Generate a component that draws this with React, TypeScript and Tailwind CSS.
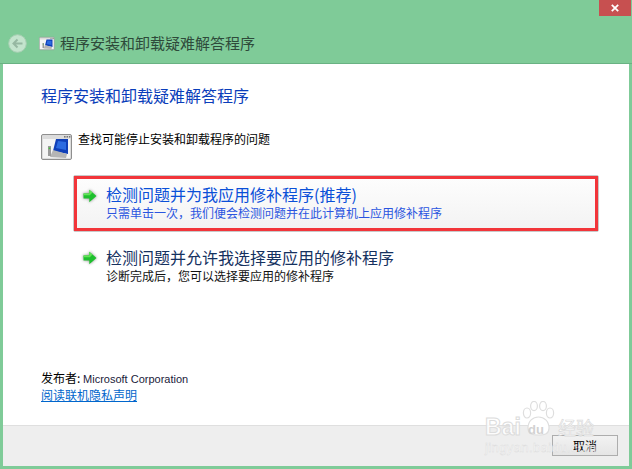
const cjk = "font-['Microsoft_YaHei','Noto_Sans_CJK_SC','Liberation_Sans',sans-serif]";

function GreenArrow() {
  return (
    <svg width="14" height="14" viewBox="0 0 14 14" className="shrink-0 overflow-visible drop-shadow-[0_0_1.5px_#8a8a8a]">
      <path d="M0.5 4.600h5.800V0.800L13.500 7l-7.200 6.200V9.400H0.500z" fill="#1ec02e" />
      <path d="M0.500 4.600h5.800V0.800L9.500 3.600 6.800 6.200H0.500z" fill="#62e457" />
    </svg>
  );
}

function AppIcon({ size }: { size: number }) {
  return (
    <svg width={size} height={size} viewBox="0 0 32 32" className="shrink-0">
      <rect x="0.5" y="2.500" width="30" height="25" rx="1.500" fill="#dcdcdc" stroke="#8f8f8f" />
      <rect x="2" y="7" width="27" height="19" fill="#f4f4f4" />
      <rect x="23" y="4" width="1.600" height="1.600" fill="#777" />
      <rect x="25.500" y="4" width="1.600" height="1.600" fill="#777" />
      <rect x="28" y="4" width="1.400" height="1.600" fill="#777" />
      <path d="M15 7h12v15l-15-3z" fill="#0f3fb8" />
      <path d="M17 9l8 1v8l-10-2z" fill="#2c6be0" />
      <path d="M9 25l3-7 14 4-1 4z" fill="#b5b5b5" />
      <rect x="7" y="14" width="3" height="10" fill="#9a9a9a" />
      <rect x="7.700" y="15.500" width="1.600" height="1.600" fill="#43c13a" />
    </svg>
  );
}

function BackIcon() {
  return (
    <svg width="19" height="19" viewBox="0 0 19 19" className="shrink-0">
      <circle cx="9.500" cy="9.500" r="8.800" fill="#c3e4cd" stroke="#a8cfb3" />
      <path d="M14.500 9.500H6M9.500 5.500l-4 4 4 4" fill="none" stroke="#96b8a2" strokeWidth="2" />
    </svg>
  );
}

function Watermark() {
  return (
    <div className="absolute left-[485px] top-[401px] w-[118px] h-[54px] pointer-events-none font-['Liberation_Sans',sans-serif]">
      <svg width="34" height="36" viewBox="0 0 34 36" className="absolute left-[37px] top-0" fill="#ffffff" stroke="#dedede" strokeWidth="1.200">
        <ellipse cx="5" cy="12" rx="3.600" ry="5" />
        <ellipse cx="12" cy="5" rx="3.400" ry="4.600" />
        <ellipse cx="21" cy="5" rx="3.400" ry="4.600" />
        <ellipse cx="28" cy="12" rx="3.600" ry="5" />
        <path d="M6 27c0-7 5-11 10.500-11S27 20 27 27c0 6-4 7-10.500 7S6 33 6 27z" />
      </svg>
      <span className="absolute left-0 top-[13px] text-[23px] leading-[26px] font-bold text-white/80 [-webkit-text-stroke:1px_#dcdcdc]">Bai</span>
      <span className="absolute left-[43px] top-[22px] text-[13px] leading-[14px] font-bold text-[#d2d2d2]">du</span>
      <span className={`absolute left-[73px] top-[15px] text-[18px] leading-[22px] text-white/80 [-webkit-text-stroke:0.6px_#d8d8d8] ${cjk}`}>经验</span>
      <span className="absolute left-0 top-[40px] text-[13px] leading-[14px] tracking-[0.4px] text-white/70 [-webkit-text-stroke:0.4px_#dadada]">jingyan.baidu.com</span>
    </div>
  );
}

export default function App() {
  return (
    <div className={`relative w-[632px] h-[469px] overflow-hidden bg-[#7fcb98] flex flex-col pb-[3px] ${cjk}`}>
      <div className="h-[64px] shrink-0 relative flex items-end pb-[10px] pl-[8px] border-b border-[#69b283]">
        <BackIcon />
        <div className="ml-[12px] flex items-center h-[19px]">
          <AppIcon size={16} />
          <span className="ml-[5px] -mt-[2px] text-[15px] leading-[20px] text-[#2e4a3a]">程序安装和卸载疑难解答程序</span>
        </div>
        <div className="absolute right-[1px] top-0 w-[32px] h-[16px] bg-[#c75050] flex items-center justify-center">
          <svg width="8" height="8" viewBox="0 0 8 8">
            <path d="M0.800 0.800l6.400 6.400M7.200 0.800L0.800 7.200" stroke="#fff" strokeWidth="1.800" />
          </svg>
        </div>
      </div>

      <div className="flex-1 mx-[3px] flex flex-col bg-white">
        <div className="flex-1 flex flex-col pl-[38px] pr-[30px]">
          <h1 className="mt-[20px] text-[16px] leading-[22px] text-[#0a3dba] font-normal">程序安装和卸载疑难解答程序</h1>
          <div className="mt-[26px] flex items-start">
            <AppIcon size={32} />
            <span className="ml-[5px] text-[12px] leading-[13px] text-black">查找可能停止安装和卸载程序的问题</span>
          </div>

          <div className="mt-[11px] ml-[32px] w-[526px] h-[57px] rounded-[2px] border border-[#c9c9c9] bg-white">
            <div className="h-[55px] border-[3px] border-[#f2353a] bg-gradient-to-b from-[#fdfdfd] to-[#f3f3f3] flex items-start pl-[6px] pt-[4px]">
              <div className="mt-[6px]"><GreenArrow /></div>
              <div className="ml-[9px]">
                <div className="text-[16px] leading-[22px] text-[#0a50d8]">检测问题并为我应用修补程序(推荐)</div>
                <div className="text-[12px] leading-[16px] text-[#2a55e0]">只需单击一次，我们便会检测问题并在此计算机上应用修补程序</div>
              </div>
            </div>
          </div>

          <div className="mt-[14px] ml-[42px] flex items-start">
            <div className="mt-[5px]"><GreenArrow /></div>
            <div className="ml-[9px]">
              <div className="text-[16px] leading-[22px] text-[#15315f]">检测问题并允许我选择要应用的修补程序</div>
              <div className="text-[12px] leading-[16px] text-[#111]">诊断完成后，您可以选择要应用的修补程序</div>
            </div>
          </div>

          <div className="mt-auto mb-[22px]">
            <div className="text-[12px] leading-[15px] text-black">发布者: <span className="font-['Liberation_Sans',sans-serif] text-[11px] text-[#1a1a3a]">Microsoft Corporation</span></div>
            <a className="block text-[12px] leading-[16px] text-[#0066cc] underline">阅读联机隐私声明</a>
          </div>
        </div>

        <div className="h-[41px] shrink-0 bg-[#eeeeee] border-t border-[#dfdfdf] flex justify-end items-start pt-[9px] pr-[11px]">
          <button className="w-[66px] h-[21px] border border-[#adadad] bg-gradient-to-b from-[#f2f2f2] to-[#e5e5e5] text-[12px] leading-[18px] text-black">取消</button>
        </div>
      </div>
      <Watermark />
    </div>
  );
}
